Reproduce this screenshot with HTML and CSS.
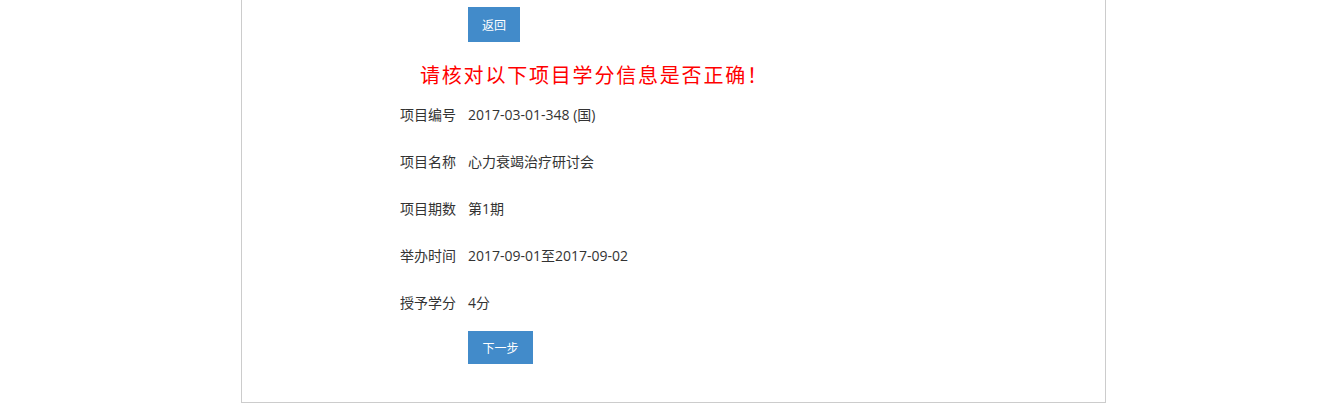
FILE: index.html
```html
<!DOCTYPE html>
<html lang="zh-CN">
<head>
    <meta charset="UTF-8">
    <title>项目学分信息确认</title>
    <link rel="stylesheet" href="styles.css">
</head>
<body>
    <div class="container">
        <button class="btn btn-back">返回</button>
        <h2 class="notice">请核对以下项目学分信息是否正确！</h2>

        <div class="info-row">
            <span class="info-label">项目编号</span>
            <span class="info-value">2017-03-01-348 (国)</span>
        </div>
        <div class="info-row">
            <span class="info-label">项目名称</span>
            <span class="info-value">心力衰竭治疗研讨会</span>
        </div>
        <div class="info-row">
            <span class="info-label">项目期数</span>
            <span class="info-value">第1期</span>
        </div>
        <div class="info-row">
            <span class="info-label">举办时间</span>
            <span class="info-value">2017-09-01至2017-09-02</span>
        </div>
        <div class="info-row">
            <span class="info-label">授予学分</span>
            <span class="info-value">4分</span>
        </div>

        <button class="btn btn-next">下一步</button>
    </div>
</body>
</html>
```

FILE: styles.css
```css
body {
    margin: 0;
    font-family: "Open Sans", "Noto Sans CJK SC", sans-serif;
    font-size: 14px;
    color: #333;
    background: #fff;
}
.container {
    width: 863px;
    margin-left: 241px;
    padding: 7px 0 38px 0;
    border: 1px solid #ccc;
    border-top: none;
}
.btn {
    display: block;
    margin-left: 226px;
    border: none;
    background-color: #428bca;
    color: #fff;
    font-family: "Noto Sans CJK SC", sans-serif;
    font-size: 12px;
    cursor: pointer;
}
.btn-back {
    width: 52px;
    height: 35px;
}
.btn-next {
    width: 65px;
    height: 33px;
    margin-top: 6px;
}
.notice {
    margin: 19px 0 1px 178px;
    font-family: "Noto Sans CJK SC", sans-serif;
    font-size: 20px;
    font-weight: normal;
    line-height: 28px;
    letter-spacing: 1.8px;
    color: #f00;
}
.info-row {
    display: flex;
    align-items: center;
    height: 47px;
}
.info-label {
    width: 214px;
    text-align: right;
    font-family: "Noto Sans CJK SC", sans-serif;
}
.info-value {
    padding-left: 12px;
}
```
